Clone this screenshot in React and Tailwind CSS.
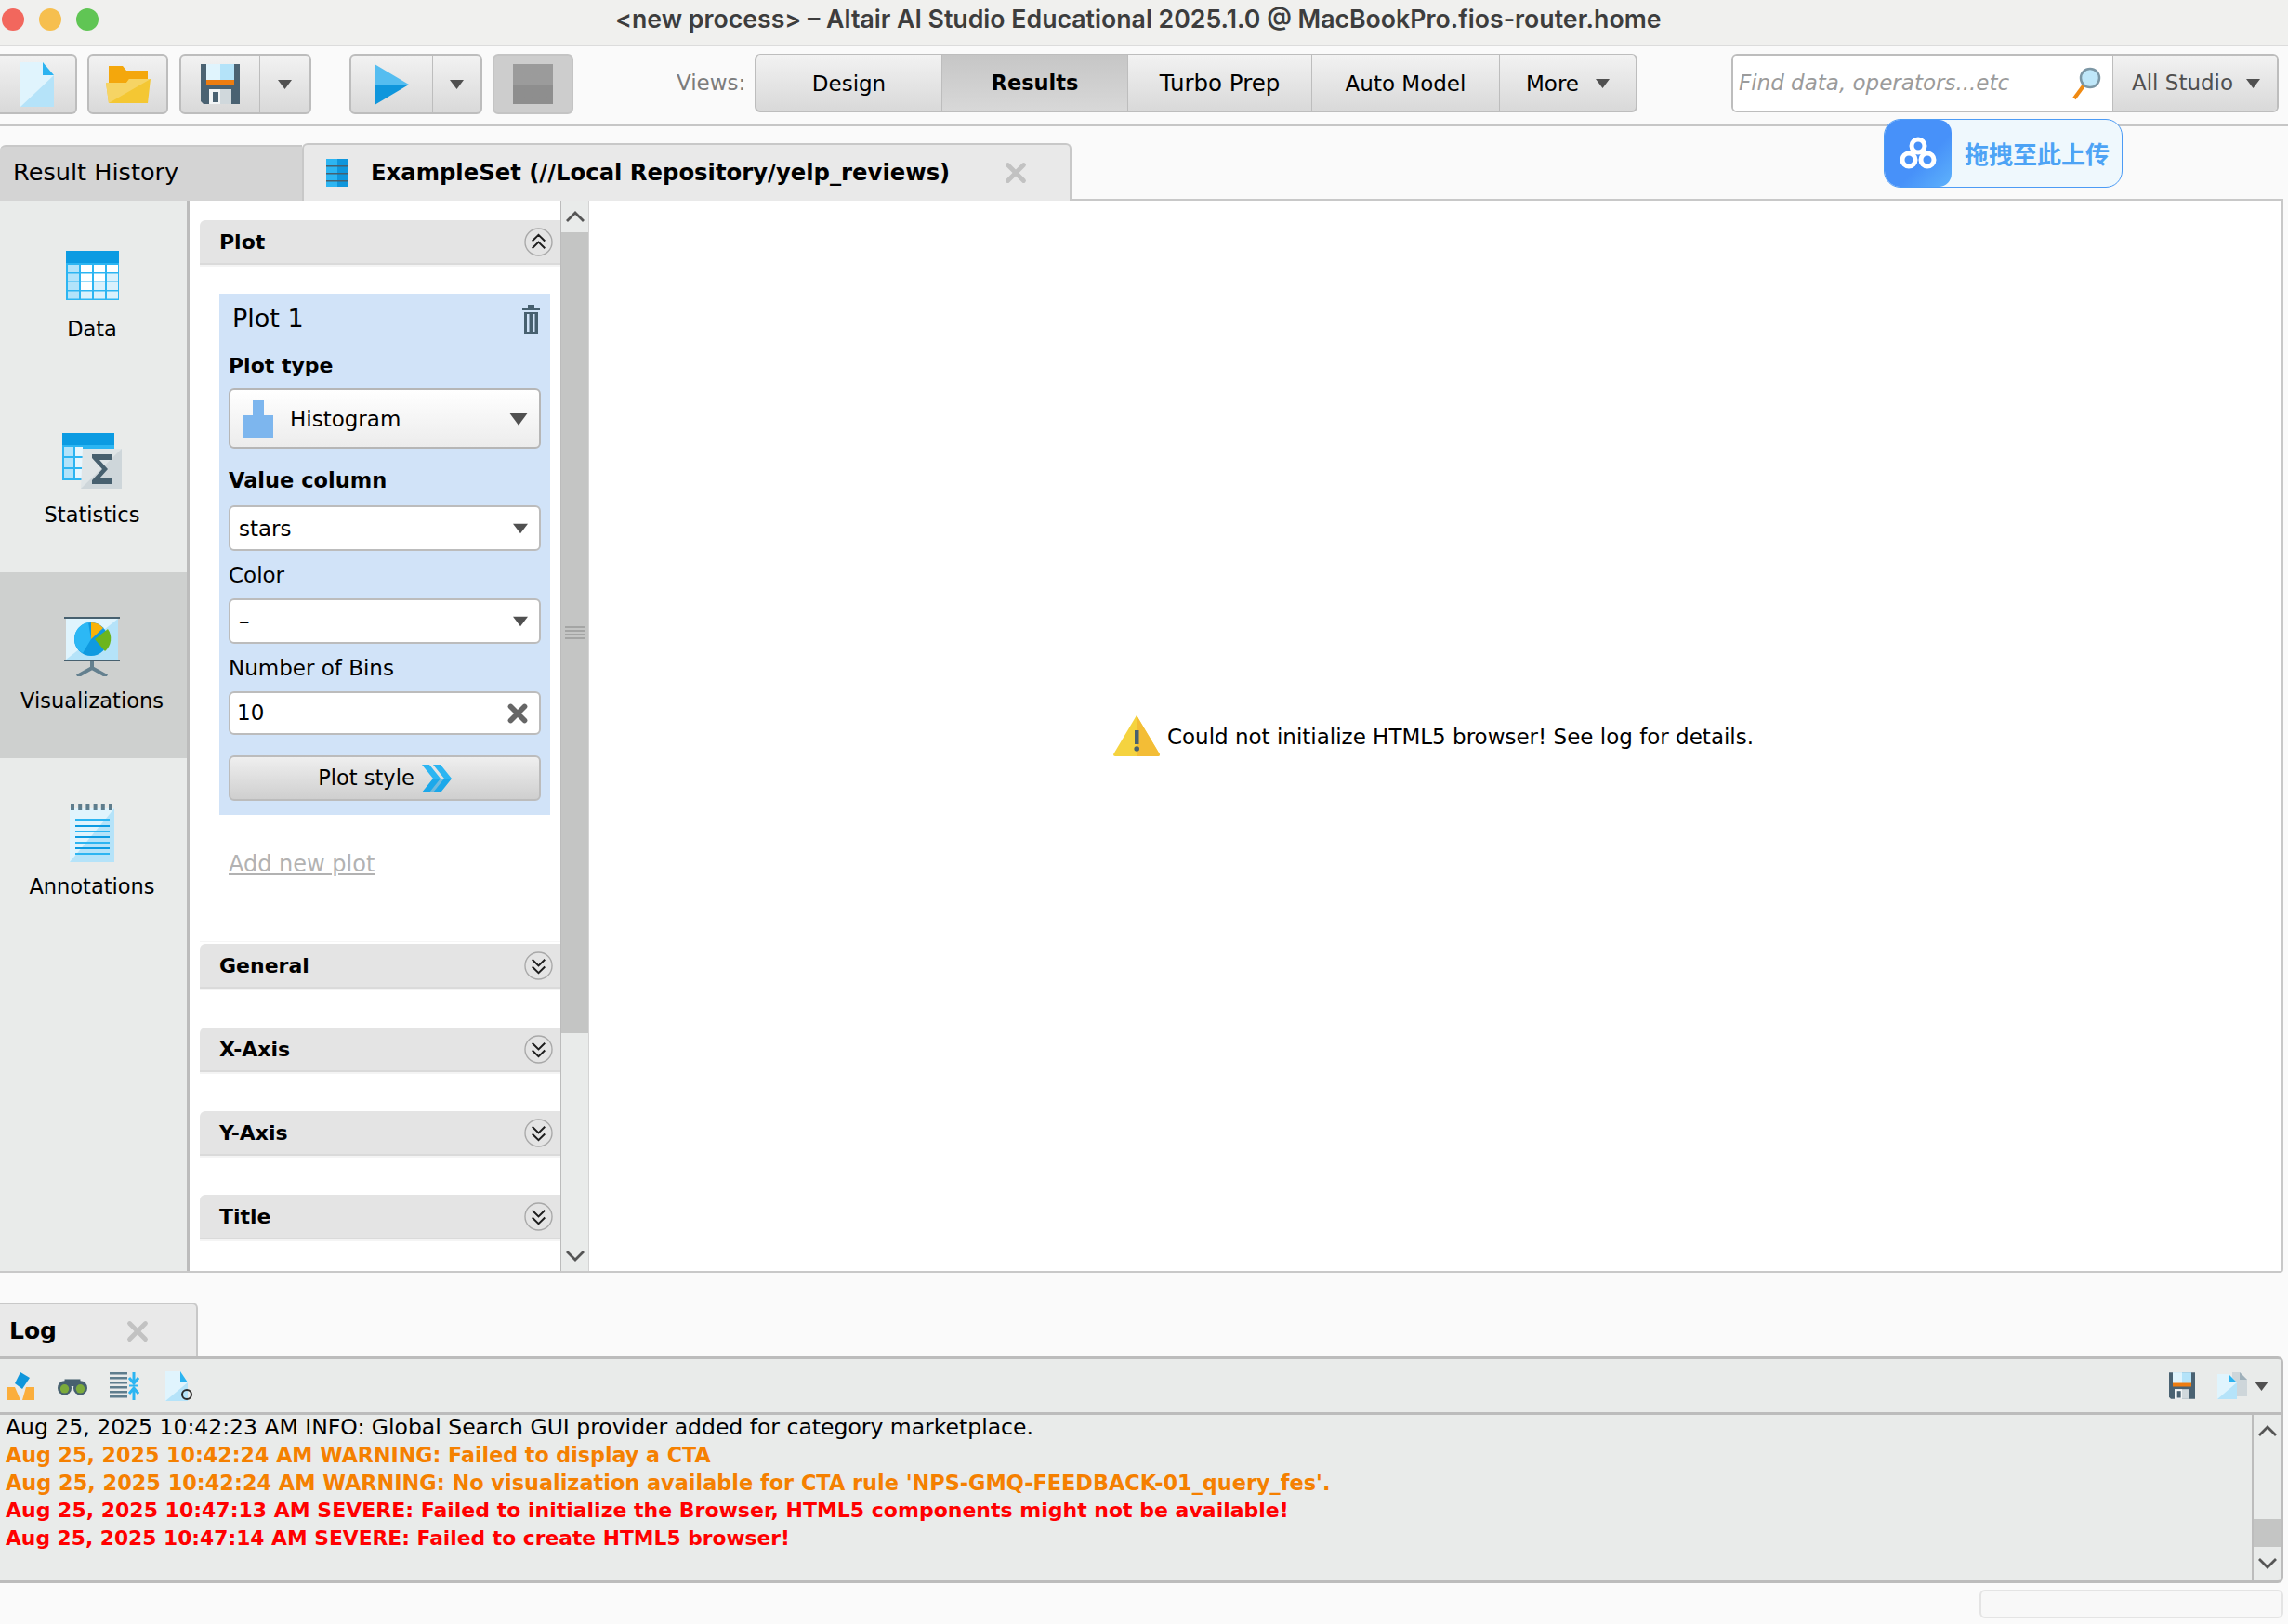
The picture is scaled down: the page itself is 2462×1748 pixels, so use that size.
import { X } from "lucide-react";

function Caret({ className = "w-[15px] h-[10px]" }) {
  return (
    <svg viewBox="0 0 15 10" className={className}>
      <path d="M0 0H15L7.5 10Z" fill="#505050" />
    </svg>
  );
}

function ToolDivider() {
  return <div className="w-px self-stretch bg-[#bdbdbd]" />;
}

function DocIcon({ className }) {
  return (
    <svg viewBox="0 0 36 48" className={className}>
      <path d="M0 0H24L36 14V48H0Z" fill="#e0f4fd" />
      <path d="M36 14V48H0Z" fill="#b5e3f9" />
      <path d="M24 0L36 14H24Z" fill="#2cb3f0" />
    </svg>
  );
}

function FolderIcon() {
  return (
    <svg viewBox="0 0 48 40" className="w-[48px] h-[40px]">
      <path d="M3 0H18L22 5H45V30H3Z" fill="#f4a70c" />
      <path d="M0 18H22L25 14H48L45 40H3Z" fill="#f4c733" />
      <path d="M0 18H22L25 14H48L3 40Z" fill="#f6d464" />
    </svg>
  );
}

function SaveIcon({ className }) {
  return (
    <svg viewBox="0 0 42 43" className={className}>
      <path d="M0 0H42V43H3L0 40Z" fill="#4a6272" />
      <rect x="6" y="0" width="30" height="18" fill="#b4e3f9" />
      <rect x="6" y="0" width="15" height="18" fill="#e0f4fd" />
      <rect x="6" y="17" width="30" height="6" fill="#ee7d11" />
      <rect x="9" y="27" width="24" height="16" fill="#d0d8dc" />
      <rect x="9" y="27" width="12" height="16" fill="#f2f5f6" />
      <rect x="13" y="30" width="6" height="11" fill="#4a6272" />
    </svg>
  );
}

function PlayIcon() {
  return (
    <svg viewBox="0 0 37 44" className="w-[37px] h-[44px]">
      <path d="M0 0L37 22H0Z" fill="#55bdf0" />
      <path d="M0 44L37 22H0Z" fill="#0f96dc" />
    </svg>
  );
}

function TableIcon({ className }) {
  const cols = [0, 1, 2, 3];
  const rows = [0, 1, 2, 3];
  return (
    <svg viewBox="0 0 57 53" className={className}>
      <rect width="57" height="53" fill="#2cb5f2" />
      <rect width="57" height="13" fill="#0c9be2" />
      {rows.map((r) =>
        cols.map((c) => (
          <rect
            key={r + "-" + c}
            x={2 + c * 14}
            y={15 + r * 9.5}
            width="12"
            height="8"
            fill={c === 0 ? "#b2e3fa" : r + c < 4 ? "#ffffff" : "#d9f1fc"}
          />
        ))
      )}
    </svg>
  );
}

function SigmaIcon() {
  return (
    <svg viewBox="0 0 64 60" className="w-[64px] h-[60px]">
      <rect x="0" y="0" width="56" height="51" fill="#2cb5f2" />
      <rect x="0" y="0" width="56" height="13" fill="#0c9be2" />
      {[0, 1, 2].map((r) => (
        <rect key={r} x="2" y={15 + r * 12} width="10" height="10" fill="#b2e3fa" />
      ))}
      {[0, 1, 2].map((r) => (
        <rect key={r} x="14" y={15 + r * 12} width="8" height="10" fill="#e8f6fd" />
      ))}
      <path d="M22 17H64V60H20Z" fill="#dfe5e7" />
      <path d="M64 17V60H20Z" fill="#ced6da" />
      <path d="M53 23H32V27L43 39L32 51V55H53V49H40L49 39L40 29H53Z" fill="#47606f" />
    </svg>
  );
}

function ChartIcon() {
  return (
    <svg viewBox="0 0 60 64" className="w-[60px] h-[64px]">
      <rect x="0" y="0" width="60" height="2" fill="#47606f" />
      <rect x="2" y="2" width="56" height="44" fill="#e0f4fd" />
      <path d="M58 2V46H2Z" fill="#b5e3f9" />
      <rect x="0" y="46" width="60" height="2" fill="#47606f" />
      <circle cx="29" cy="24" r="18" fill="#0f9ae0" />
      <path d="M29 24L29 6A18 18 0 0 1 42 12Z" fill="#f9b208" />
      <path d="M33 24L47 13A18 18 0 0 1 44 37Z" fill="#6cb51e" />
      <path d="M11 24A18 18 0 0 1 26 6L29 24L20 39A18 18 0 0 1 11 24Z" fill="#2cb8f5" />
      <rect x="28" y="48" width="4" height="8" fill="#64808f" />
      <path d="M14 64L30 55L46 64" fill="none" stroke="#64808f" strokeWidth="4" />
    </svg>
  );
}

function NotesIcon() {
  return (
    <svg viewBox="0 0 48 63" className="w-[48px] h-[63px]">
      <path d="M0 5H48V63H0Z" fill="#e0f4fd" />
      <path d="M48 5V63H0Z" fill="#b5e3f9" />
      {[0, 1, 2, 3, 4, 5].map((i) => (
        <rect key={i} x={1 + i * 8.2} y="0" width="4" height="7" fill="#5e7d8d" />
      ))}
      {[17, 23, 29, 35, 41, 47, 53].map((y, i) => (
        <rect key={y} x="6" y={y} width="37" height="2" fill={i % 2 ? "#0c9be2" : "#2cb5f2"} />
      ))}
    </svg>
  );
}

function CircleChevrons({ up }) {
  return (
    <svg viewBox="0 0 32 32" className="w-[31px] h-[31px]">
      <circle cx="16" cy="16" r="15" fill="none" stroke="#a8a8a8" strokeWidth="1.4" />
      <path
        d={up ? "M9 15L16 8L23 15M9 23L16 16L23 23" : "M9 9L16 16L23 9M9 17L16 24L23 17"}
        fill="none"
        stroke="#1d1d1d"
        strokeWidth="2"
      />
    </svg>
  );
}

function Section({ title, up, children }) {
  return (
    <div>
      <div className="h-[48px] rounded-tl-[6px] bg-[#e4e4e4] border-b-2 border-[#dadada] shadow-[0_2px_0_#f4f4f4] flex items-center justify-between pl-[21px] pr-[8px]">
        <span className="text-[22px] font-bold text-black">{title}</span>
        <CircleChevrons up={up} />
      </div>
      {children}
    </div>
  );
}

function SelectBox({ label, tall }) {
  return (
    <div
      className={
        tall
          ? "h-[65px] rounded-[6px] border-2 border-[#b6b6b6] bg-linear-to-b from-white to-[#ececec] flex items-center justify-between pl-[14px] pr-[12px]"
          : "h-[49px] rounded-[6px] border-2 border-[#bcbcbc] bg-white flex items-center justify-between pl-[9px] pr-[12px]"
      }
    >
      <div className="flex items-center gap-[18px] text-[23px] text-black">
        {tall && (
          <svg viewBox="0 0 32 40" className="w-[32px] h-[40px]">
            <path d="M10 0H22V16H32V40H0V16H10Z" fill="#7db6ee" />
          </svg>
        )}
        <span className="pt-[2px]">{label}</span>
      </div>
      <Caret className={tall ? "w-[20px] h-[14px]" : "w-[16px] h-[12px]"} />
    </div>
  );
}

function SideItem({ icon, label, active }) {
  return (
    <div className={active ? "h-[200px] bg-[#ced0cf] flex flex-col items-center pt-[47px] pr-[3px]" : "h-[200px] flex flex-col items-center pt-[47px] pr-[3px]"}>
      <div className="h-[66px] flex items-center justify-center">{icon}</div>
      <span className="mt-[10px] text-[22.5px] leading-[30px] text-black">{label}</span>
    </div>
  );
}

function ScrollArrow({ up }) {
  return (
    <svg viewBox="0 0 20 12" className="w-[20px] h-[12px]">
      <path d={up ? "M1 11L10 2L19 11" : "M1 1L10 10L19 1"} fill="none" stroke="#555" strokeWidth="2.8" />
    </svg>
  );
}

const logLines = [
  { text: "Aug 25, 2025 10:42:23 AM INFO: Global Search GUI provider added for category marketplace.", cls: "text-black text-[23.5px]" },
  { text: "Aug 25, 2025 10:42:24 AM WARNING: Failed to display a CTA", cls: "text-[#f58000] font-bold text-[22.2px]" },
  { text: "Aug 25, 2025 10:42:24 AM WARNING: No visualization available for CTA rule 'NPS-GMQ-FEEDBACK-01_query_fes'.", cls: "text-[#f58000] font-bold text-[22.4px]" },
  { text: "Aug 25, 2025 10:47:13 AM SEVERE: Failed to initialize the Browser, HTML5 components might not be available!", cls: "text-[#ff0000] font-bold text-[22px]" },
  { text: "Aug 25, 2025 10:47:14 AM SEVERE: Failed to create HTML5 browser!", cls: "text-[#ff0000] font-bold text-[21.8px]" },
];

export default function App() {
  const toolBtn = "h-[65px] rounded-[6px] border-2 border-[#bdbdbd] bg-linear-to-b from-[#f2f2f2] to-[#d9d9d9] flex items-center";
  const segment = "h-full flex items-center justify-center pt-[2px] border-r border-[#bdbdbd] text-black";

  return (
    <div className="relative w-[2462px] h-[1748px] overflow-hidden flex flex-col bg-[#fafafa] font-['DejaVu_Sans',sans-serif]">
      {/* title bar */}
      <div className="h-[50px] shrink-0 bg-[#f0f0ee] border-b-2 border-[#dcdcdc] flex items-center pl-[2px] pb-[6px]">
        <div className="flex gap-[16px]">
          <div className="w-[24px] h-[24px] rounded-full bg-[#f2675d]" />
          <div className="w-[24px] h-[24px] rounded-full bg-[#f6bf4f]" />
          <div className="w-[24px] h-[24px] rounded-full bg-[#60c554]" />
        </div>
        <span className="ml-[556px] -mt-[2px] text-[26.7px] font-semibold text-[#3d3d3d] font-['Inter',sans-serif] whitespace-nowrap">
          &lt;new process&gt; – Altair AI Studio Educational 2025.1.0 @ MacBookPro.fios-router.home
        </span>
      </div>

      {/* toolbar */}
      <div className="h-[86px] shrink-0 border-b-[3px] border-[#c6c6c6] flex items-start pt-[8px]">
        <div className={toolBtn + " w-[83px] border-l-0 rounded-l-none pl-[22px]"}>
          <DocIcon className="w-[36px] h-[48px]" />
        </div>
        <div className={toolBtn + " w-[87px] ml-[11px] justify-center"}>
          <FolderIcon />
        </div>
        <div className={toolBtn + " w-[142px] ml-[12px]"}>
          <div className="w-[84px] flex justify-center">
            <SaveIcon className="w-[42px] h-[43px]" />
          </div>
          <ToolDivider />
          <div className="flex-1 flex justify-center">
            <Caret />
          </div>
        </div>
        <div className={toolBtn + " w-[143px] ml-[41px]"}>
          <div className="w-[87px] flex justify-center">
            <PlayIcon />
          </div>
          <ToolDivider />
          <div className="flex-1 flex justify-center">
            <Caret />
          </div>
        </div>
        <div className="h-[65px] w-[87px] ml-[11px] rounded-[6px] border-2 border-[#c4c4c4] bg-[#cdcdcd] flex items-center justify-center">
          <div className="w-[43px] h-[43px] bg-linear-to-b from-[#9b9b9b] from-50% to-[#8e8e8e] to-50%" />
        </div>
        <span className="ml-[111px] w-[84px] h-[63px] flex items-center text-[23px] text-[#7c7c7c]">Views:</span>
        <div className="h-[63px] flex rounded-[6px] border-2 border-t border-[#bdbdbd] bg-linear-to-b from-[#f2f2f2] to-[#d9d9d9]">
          <div className={segment + " w-[200px] text-[23px]"}>Design</div>
          <div className={segment + " w-[200px] font-bold text-[22.5px] bg-linear-to-b from-[#c6c6c6] to-[#d8d8d8]"}>Results</div>
          <div className={segment + " w-[198px] text-[24.5px]"}>Turbo Prep</div>
          <div className={segment + " w-[202px] text-[23px]"}>Auto Model</div>
          <div className={segment + " w-[146px] border-r-0 gap-[18px] text-[23px]"}>
            <span>More</span>
            <Caret />
          </div>
        </div>
        <div className="ml-[101px] h-[63px] w-[589px] flex rounded-[6px] border-2 border-[#bdbdbd] overflow-hidden">
          <div className="w-[409px] bg-white flex items-center justify-between pl-[6px] pr-[12px] border-r border-[#bdbdbd]">
            <span className="text-[23px] italic text-[#9b9b9b]">Find data, operators...etc</span>
            <svg viewBox="0 0 32 36" className="w-[32px] h-[36px]">
              <path d="M14 19L3 34" stroke="#f08a12" strokeWidth="4" />
              <circle cx="20" cy="12" r="10" fill="#bfe7f9" stroke="#7c97a5" strokeWidth="2.5" />
            </svg>
          </div>
          <div className="flex-1 bg-linear-to-b from-[#f2f2f2] to-[#d9d9d9] flex items-center justify-between pl-[20px] pr-[18px] text-[23px] text-[#505050]">
            <span>All Studio</span>
            <Caret />
          </div>
        </div>
      </div>

      {/* cloud upload overlay */}
      <div className="absolute left-[2027px] top-[128px] w-[257px] h-[74px] rounded-[18px] border border-[#4c9bf5] bg-[#eff8fd] flex items-center z-10 overflow-hidden">
        <div className="w-[72px] h-full rounded-r-[14px] bg-linear-to-br from-[#4791f9] from-60% to-[#5fb2fb] flex items-center justify-center">
          <svg viewBox="0 0 40 36" className="w-[40px] h-[36px]">
            <g fill="none" stroke="#fff" strokeWidth="5">
              <circle cx="20" cy="10" r="7" />
              <circle cx="10" cy="25" r="7" />
              <circle cx="30" cy="25" r="7" />
            </g>
          </svg>
        </div>
        <span className="ml-[14px] pb-[2px] text-[26px] font-bold text-[#4da3f5] font-['Noto_Sans_CJK_SC',sans-serif]">拖拽至此上传</span>
      </div>

      {/* tab strip */}
      <div className="h-[80px] shrink-0 flex items-end">
        <div className="w-[325px] h-[60px] bg-[#d4d4d4] border-t-2 border-[#c8c8c8] rounded-tl-[6px] flex items-center pl-[14px] pb-[4px] text-[25.6px] text-black">
          Result History
        </div>
        <div className="w-[828px] h-[62px] bg-[#e9e9e9] border-x-2 border-t-2 border-[#c8c8c8] rounded-t-[6px] flex items-center pl-[24px]">
          <svg viewBox="0 0 24 30" className="w-[24px] h-[30px]">
            <rect width="24" height="30" fill="#2cb5f2" />
            <rect x="12" width="12" height="30" fill="#0f96dc" />
            {[7, 15, 23].map((y) => (
              <rect key={y} y={y} width="24" height="1.5" fill="#47606f" />
            ))}
          </svg>
          <span className="ml-[24px] text-[24.3px] font-bold text-black whitespace-nowrap">ExampleSet (//Local Repository/yelp_reviews)</span>
          <X className="ml-[54px] w-[34px] h-[34px] text-[#c2c2c2]" strokeWidth={3.4} />
        </div>
        <div className="flex-1 h-[2px] mr-[5px] bg-[#c8c8c8]" />
      </div>

      {/* main area */}
      <div className="h-[1154px] shrink-0 mr-[5px] flex border-b-2 border-r-2 border-[#c8c8c8] rounded-br-[4px]">
        <div className="w-[204px] shrink-0 bg-[#e9ebea] border-r-[3px] border-[#bcbcbc]">
          <SideItem icon={<TableIcon className="w-[57px] h-[53px]" />} label="Data" />
          <SideItem icon={<SigmaIcon />} label="Statistics" />
          <SideItem icon={<ChartIcon />} label="Visualizations" active />
          <SideItem icon={<NotesIcon />} label="Annotations" />
        </div>

        <div className="w-[400px] shrink-0 bg-white pl-[11px] pt-[21px] border-r border-[#bcbcbc] overflow-hidden">
          <Section title="Plot" up>
            <div className="pt-[31px] pl-[21px] pr-[11px] h-[729px] border-b border-[#f6f6f6]">
              <div className="h-[561px] bg-[#d1e3f8] px-[10px] flex flex-col">
                <div className="h-[52px] flex items-center justify-between pl-[4px] pr-[1px] pt-[2px] text-[27px] text-black">
                  <span>Plot 1</span>
                  <svg viewBox="0 0 19 31" className="w-[19px] h-[31px]">
                    <path d="M6 0H13V3H19V6H0V3H6Z" fill="#47606f" />
                    <path d="M2 8H17V31H2ZM5 10V29H7.5V10ZM11 10V29H13.5V10Z" fill="#47606f" fillRule="evenodd" />
                  </svg>
                </div>
                <div className="h-[50px] flex items-center text-[22px] font-bold text-black">Plot type</div>
                <SelectBox label="Histogram" tall />
                <div className="h-[61px] flex items-center pt-[9px] text-[22.5px] font-bold text-black">Value column</div>
                <SelectBox label="stars" />
                <div className="h-[51px] flex items-center pt-[2px] text-[23px] text-black">Color</div>
                <SelectBox label="–" />
                <div className="h-[51px] flex items-center pt-[2px] text-[23px] text-black">Number of Bins</div>
                <div className="h-[47px] rounded-[6px] border-2 border-[#bcbcbc] bg-white flex items-center justify-between pl-[7px] pr-[8px] text-[23px] text-black">
                  <span>10</span>
                  <X className="w-[30px] h-[30px] text-[#666]" strokeWidth={4.5} />
                </div>
                <div className="mt-[22px] h-[49px] rounded-[6px] border-2 border-[#bcbcbc] bg-linear-to-b from-[#efefef] to-[#cfcfcf] flex items-center justify-center gap-[8px] text-[22.5px] text-black">
                  <span>Plot style</span>
                  <svg viewBox="0 0 32 30" className="w-[32px] h-[30px]">
                    <path d="M0 0H8L20 15L8 30H0L12 15Z" fill="#2cb5f2" />
                    <path d="M12 0H20L32 15L20 30H12L24 15Z" fill="#2cb5f2" />
                    <path d="M12 15H32L20 30H0Z" fill="#0c9be2" opacity="0.5" />
                  </svg>
                </div>
              </div>
              <div className="mt-[36px] ml-[10px] text-[24px] leading-[34px] text-[#b2b2b2] underline">Add new plot</div>
            </div>
          </Section>
          <div className="mt-[2px]"></div>
          <div className="flex flex-col gap-[42px] mt-[0px]">
            <Section title="General" />
            <Section title="X-Axis" />
            <Section title="Y-Axis" />
            <Section title="Title" />
          </div>
        </div>

        <div className="w-[30px] shrink-0 bg-[#e9ebea] flex flex-col items-center border-r border-[#d4d4d4]">
          <div className="h-[34px] flex items-center">
            <ScrollArrow up />
          </div>
          <div className="w-full h-[862px] bg-[#c4c5c4] flex flex-col items-center justify-center gap-[2px] pb-[0px]">
            <div className="w-[22px] h-[2px] bg-[#a4a5a4]" />
            <div className="w-[22px] h-[2px] bg-[#a4a5a4]" />
            <div className="w-[22px] h-[2px] bg-[#a4a5a4]" />
            <div className="w-[22px] h-[2px] bg-[#a4a5a4]" />
          </div>
          <div className="flex-1 flex items-end pb-[10px]">
            <ScrollArrow />
          </div>
        </div>

        <div className="flex-1 bg-white flex items-center justify-center gap-[8px] pr-[4px]">
          <svg viewBox="0 0 50 44" className="w-[50px] h-[44px]">
            <path d="M25 0L50 42Q50 44 48 44H2Q0 44 0 42Z" fill="#f5d33f" />
            <path d="M25 0L50 42Q50 44 48 44H25Z" fill="#f3bd36" />
            <rect x="23" y="16" width="4.5" height="15" fill="#47606f" />
            <circle cx="25.2" cy="36" r="2.8" fill="#47606f" />
          </svg>
          <span className="pt-[2px] text-[23px] text-black whitespace-nowrap">Could not initialize HTML5 browser! See log for details.</span>
        </div>
      </div>

      {/* log panel */}
      <div className="h-[32px] shrink-0" />
      <div className="w-[213px] h-[60px] shrink-0 rounded-tr-[6px] bg-[#e9e9e9] border-t-2 border-r-2 border-[#c8c8c8] flex items-center justify-between pl-[10px] pr-[46px]">
        <span className="text-[25px] font-bold text-black">Log</span>
        <X className="w-[34px] h-[34px] text-[#c2c2c2]" strokeWidth={3.4} />
      </div>
      <div className="h-[244px] shrink-0 mr-[5px] border-y-[3px] border-r-2 border-[#bcbcbc] rounded-r-[6px] -mt-[2px] bg-[#e9ebea] flex flex-col overflow-hidden">
        <div className="h-[60px] shrink-0 border-b-[3px] border-[#bcbcbc] flex items-center pl-[8px] pr-[14px] gap-[24px]">
          <svg viewBox="0 0 30 30" className="w-[30px] h-[30px]">
            <path d="M14 0L24 6L16 18L8 12Z" fill="#0f96dc" />
            <path d="M0 16H8L14 30H0Z" fill="#fbae3c" />
            <path d="M16 30L20 16H29V30Z" fill="#fbae3c" />
          </svg>
          <svg viewBox="0 0 34 20" className="w-[32px] h-[20px]">
            <circle cx="8" cy="12" r="8" fill="#47606f" />
            <circle cx="26" cy="12" r="8" fill="#47606f" />
            <rect x="8" y="2" width="18" height="8" fill="#47606f" />
            <circle cx="8" cy="13" r="5" fill="#7cab3b" />
            <circle cx="26" cy="13" r="5" fill="#7cab3b" />
          </svg>
          <svg viewBox="0 0 32 30" className="w-[32px] h-[30px]">
            {[0, 5, 10, 15, 20, 25].map((y) => (
              <rect key={y} y={y} width="19" height="2.5" fill="#5e7d8d" />
            ))}
            <path d="M26 0V10M21 6L26 12L31 6M26 30V19M21 23L26 17L31 23" stroke="#2cb5f2" strokeWidth="3" fill="none" />
            <path d="M21 14.5H31" stroke="#2cb5f2" strokeWidth="2" />
          </svg>
          <svg viewBox="0 0 30 32" className="w-[30px] h-[32px] ml-[4px]">
            <path d="M0 0H16L24 12V32H0Z" fill="#e0f4fd" />
            <path d="M24 12V32H0Z" fill="#b5e3f9" />
            <path d="M16 0L24 12H16Z" fill="#2cb3f0" />
            <circle cx="23" cy="25" r="5" fill="none" stroke="#2b2b2b" strokeWidth="2" />
          </svg>
          <div className="flex-1" />
          <SaveIcon className="w-[28px] h-[29px]" />
          <div className="flex items-center gap-[8px]">
            <svg viewBox="0 0 32 29" className="w-[32px] h-[29px]">
              <path d="M16 0H24L32 8V26H16Z" fill="#ced6da" />
              <path d="M24 0L32 8H24Z" fill="#9fb0ba" />
              <path d="M0 2H13L21 11V29H0Z" fill="#e0f4fd" />
              <path d="M21 11V29H0Z" fill="#b5e3f9" />
              <path d="M13 3L21 11H13Z" fill="#2cb3f0" />
            </svg>
            <Caret />
          </div>
        </div>
        <div className="flex-1 flex min-h-0">
          <div className="flex-1 pl-[6px] -mt-[2px] leading-[30px] whitespace-nowrap">
            {logLines.map((l) => (
              <div key={l.text} className={l.cls}>
                {l.text}
              </div>
            ))}
          </div>
          <div className="w-[32px] shrink-0 border-l-2 border-[#bcbcbc] flex flex-col items-center">
            <div className="h-[34px] flex items-center">
              <ScrollArrow up />
            </div>
            <div className="flex-1" />
            <div className="w-full h-[30px] bg-[#c4c5c4]" />
            <div className="h-[36px] flex items-center">
              <ScrollArrow />
            </div>
          </div>
        </div>
      </div>

      {/* status bar */}
      <div className="flex-1 flex justify-end items-center pr-[5px]">
        <div className="w-[327px] h-[31px] rounded-[6px] border-2 border-[#e4e4e4] bg-[#f8f8f8]" />
      </div>
    </div>
  );
}
